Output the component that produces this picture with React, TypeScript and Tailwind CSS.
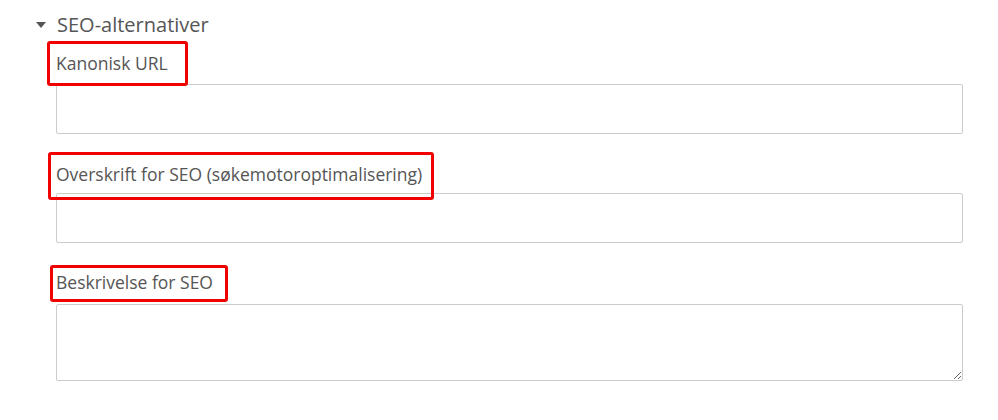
import React from "react";

const font = { fontFamily: "'Open Sans', 'Noto Sans', sans-serif" };

const Field = ({
  label,
  box,
  gapTop,
  gapBottom,
  multiline,
}: {
  label: string;
  box: string;
  gapTop: string;
  gapBottom: string;
  multiline?: boolean;
}) => (
  <div className={gapTop}>
    <div className={`relative z-10 w-fit text-[17.5px] leading-[20px] text-[#555] ${gapBottom}`}>
      {label}
      {/* red highlight */}
      <span className={`pointer-events-none absolute rounded-[3px] border-[3px] border-[#f20000] ${box}`} />
    </div>
    {multiline ? (
      <textarea className="block h-[77px] w-full rounded-[2px] border border-[#cccccc] bg-white" />
    ) : (
      <input className="block h-[50px] w-full rounded-[2px] border border-[#cccccc] bg-white" />
    )}
  </div>
);

export default function App() {
  return (
    <div className="h-[420px] w-[998px] bg-white pr-[35px] pt-[13px]" style={font}>
      <div className="flex items-center pl-[36px] text-[20px] leading-[24px] text-[#555]">
        <svg width="10" height="6" viewBox="0 0 10 6" className="mr-[11px]">
          <path d="M0 0 L10 0 L5 6 Z" fill="#555" />
        </svg>
        SEO-alternativer
      </div>
      <div className="pl-[56px]">
        <Field
          label="Kanonisk URL"
          box="-left-[9px] -top-[12px] h-[45px] w-[141px]"
          gapTop="mt-[16px]"
          gapBottom="mb-[11px]"
        />
        <Field
          label="Overskrift for SEO (søkemotoroptimalisering)"
          box="-left-[8px] -top-[12px] h-[48px] w-[386px]"
          gapTop="mt-[30px]"
          gapBottom="mb-[9px]"
        />
        <Field
          label="Beskrivelse for SEO"
          box="-left-[6px] -top-[7px] h-[37px] w-[178px]"
          gapTop="mt-[29px]"
          gapBottom="mb-[12px]"
          multiline
        />
      </div>
    </div>
  );
}
